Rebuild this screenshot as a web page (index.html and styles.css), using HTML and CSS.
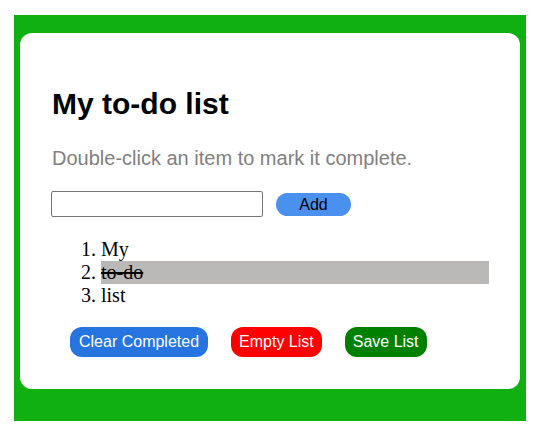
FILE: index.html
```html
<!DOCTYPE html>
<html>
<head>
<meta charset="utf-8">
<link rel="stylesheet" href="styles.css">
</head>
<body>
<div class="frame">
  <div class="card">
    <h1 class="title">My to-do list</h1>
    <p class="hint">Double-click an item to mark it complete.</p>
    <div class="entry">
      <input class="field" type="text">
      <button class="add">Add</button>
    </div>
    <ol class="items">
      <li>My</li>
      <li class="done">to-do</li>
      <li>list</li>
    </ol>
    <div class="actions">
      <button class="btn btn-clear">Clear Completed</button>
      <button class="btn btn-empty">Empty List</button>
      <button class="btn btn-save">Save List</button>
    </div>
  </div>
</div>
</body>
</html>
```
FILE: styles.css
```css
html, body {
  margin: 0;
  background: #ffffff;
}
body {
  padding: 15px 12px 0 14px;
}
.frame {
  background: #10b010;
  padding: 18px 6px 32px 6px;
}
.card {
  background: #ffffff;
  border-radius: 12px;
  padding: 32px 32px 32px 32px;
  font-family: "Liberation Sans", Arial, sans-serif;
}
.title {
  margin: 22px 0 0 0;
  font-size: 30px;
  font-weight: bold;
  line-height: 34.5px;
  color: #000;
}
.hint {
  margin: 25.5px 0 0 0;
  font-size: 20px;
  line-height: 23px;
  color: #808080;
}
.entry {
  margin: 21px 0 0 -1px;
  display: flex;
  align-items: center;
  gap: 13px;
  height: 26px;
}
.field {
  box-sizing: border-box;
  width: 212px;
  height: 26px;
  margin: 0;
  border: 1px solid #767676;
  border-radius: 2px;
  padding: 1px 2px;
}
.add {
  box-sizing: border-box;
  width: 75px;
  height: 23px;
  margin-top: 1px;
  border: none;
  border-radius: 12px;
  background: #4a90ee;
  color: #000;
  font-family: "Liberation Sans", Arial, sans-serif;
  font-size: 16px;
  padding: 0;
}
.items {
  margin: 21px -1px 0 0;
  padding: 0 0 0 49px;
  font-family: "Liberation Serif", "Times New Roman", serif;
  font-size: 20px;
  line-height: 23px;
  color: #000;
}
.items li {
  height: 23px;
}
.items .done {
  background: #bbb8b8;
  text-decoration: line-through;
}
.actions {
  margin-top: 20px;
  padding-left: 18px;
  display: flex;
  gap: 23px;
}
.btn {
  height: 30px;
  padding: 0 8px;
  border: none;
  border-radius: 12px;
  color: #ffffff;
  font-family: "Liberation Sans", Arial, sans-serif;
  font-size: 16px;
}
.btn-clear { background: #2674e0; padding: 0 9px; }
.btn-empty { background: #ff0000; }
.btn-save { background: #008000; }
```
